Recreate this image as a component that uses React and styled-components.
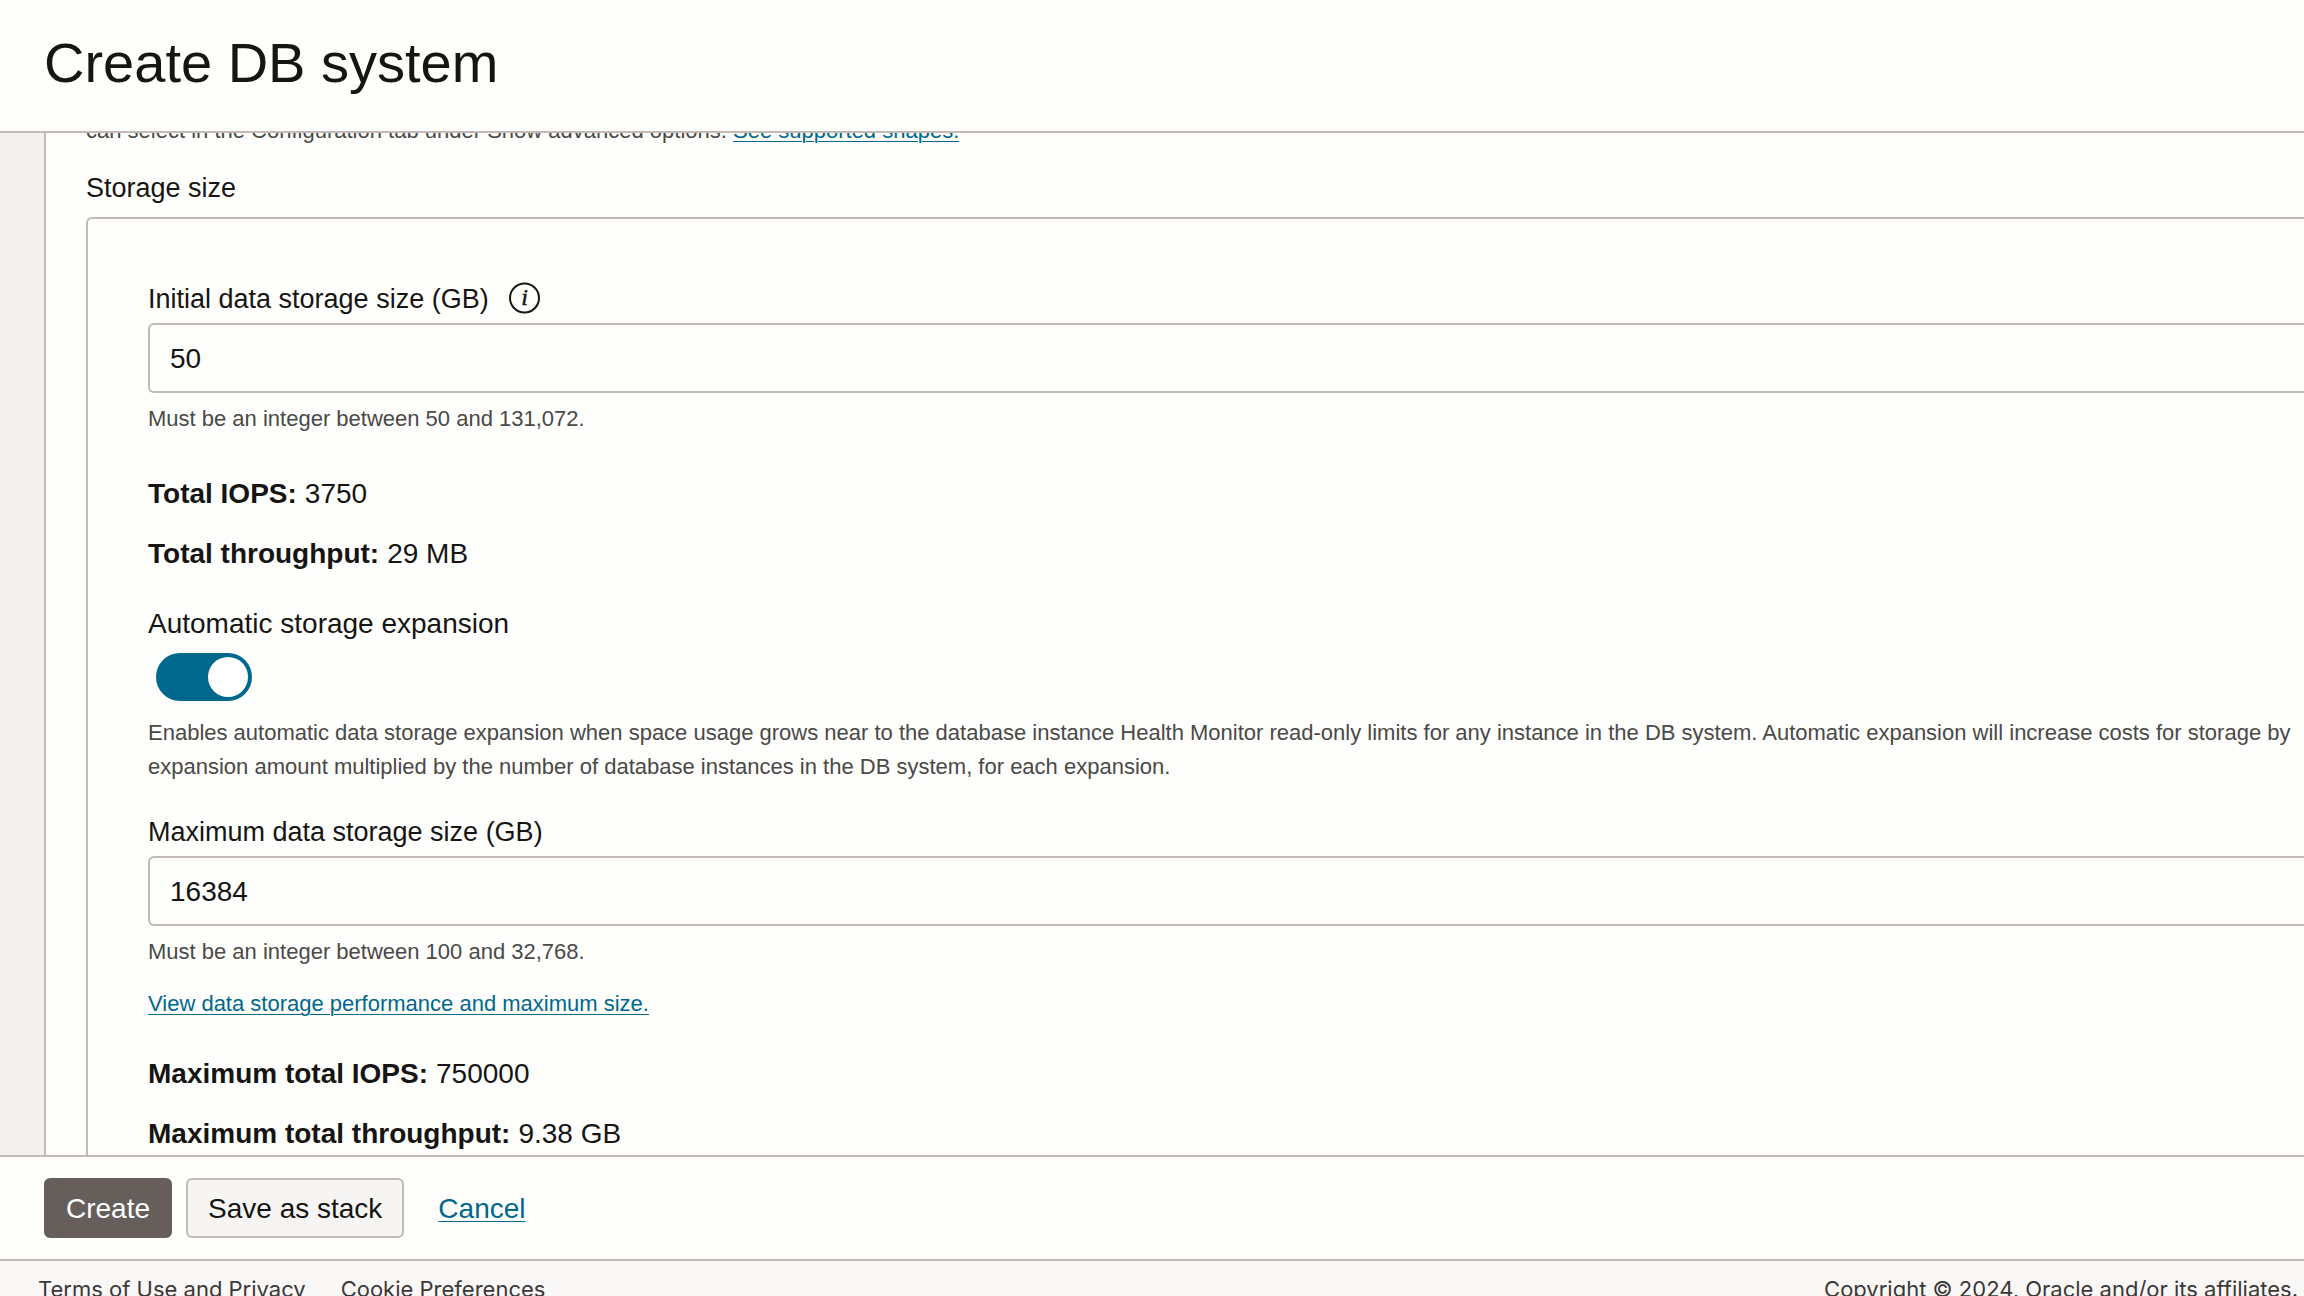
// Create DB system page
import React, { useState } from "react";
import styled, { createGlobalStyle } from "styled-components";

const GlobalStyle = createGlobalStyle`
  * {
    box-sizing: border-box;
  }
  body {
    margin: 0;
    background: #fefefc;
    color: #161513;
    font-family: 'Liberation Sans', Arial, sans-serif;
    font-size: 28px;
    line-height: 34px;
  }
`;

const Page = styled.div`
  display: flex;
  flex-direction: column;
  height: 100vh;
  overflow: hidden;
`;

// Header

const Header = styled.header`
  flex: none;
  padding: 31px 44px 36px;
  border-bottom: 2px solid #c1bab5;
`;

const Title = styled.h1`
  margin: 0;
  font-size: 56px;
  line-height: 64px;
  font-weight: 400;
`;

const Main = styled.main`
  flex: 1;
  min-height: 0;
  display: flex;
  padding-left: 44px;
  overflow: hidden;
  background: #f3f1f0;
`;

const Panel = styled.section`
  flex: 1;
  min-width: 0;
  display: flex;
  flex-direction: column;
  padding-left: 40px;
  border-left: 2px solid #c1bab5;
  background: #fefefc;
`;

const Hint = styled.p`
  margin: 0;
  color: #4a4947;
  font-size: 22px;
  white-space: nowrap;
`;

const ShapesHint = styled(Hint)`
  margin-top: -19px;
`;

const Link = styled.a`
  color: #00688c;
  text-decoration: underline;
  text-decoration-thickness: 1px;
  text-underline-offset: 3px;
`;

const SectionTitle = styled.h2`
  margin: 23px 0 12px;
  font-size: 27px;
  font-weight: 400;
`;

const StorageBox = styled.div`
  flex: 1;
  display: flex;
  flex-direction: column;
  padding: 63px 0 0 60px;
  border: 2px solid #c1bab5;
  border-right: 0;
  border-bottom: 0;
  border-top-left-radius: 6px;
`;

const Field = styled.div`
  display: flex;
  flex-direction: column;
  margin-bottom: 5px;
`;

const LabelRow = styled.div`
  display: flex;
  align-items: center;
  gap: 20px;
  height: 34px;
  margin-bottom: 7px;
`;

const Label = styled.label`
  font-size: 27px;
`;

const InfoButton = styled.button`
  display: flex;
  margin-bottom: 2px;
  padding: 0;
  border: 0;
  background: none;
  color: #161513;
`;

const Input = styled.input`
  width: 100%;
  height: 70px;
  margin-bottom: 9px;
  padding: 2px 20px 0;
  border: 2px solid #c1bab5;
  border-right: 0;
  border-radius: 6px 0 0 6px;
  background: #fefefc;
  color: #161513;
  font: inherit;
`;

// Totals

const Stats = styled.dl`
  display: flex;
  flex-direction: column;
  gap: 26px;
  margin: 36px 0;
`;

const Stat = styled.div`
  display: flex;
  gap: 8px;

  dt {
    font-weight: 700;
  }
  dd {
    margin: 0;
  }
`;

// Switch

const SwitchField = styled.div`
  display: flex;
  flex-direction: column;
  align-items: flex-start;
  gap: 12px;
  margin-bottom: 15px;
`;

const Switch = styled.input`
  appearance: none;
  display: flex;
  justify-content: ${({ checked }) => (checked ? "flex-end" : "flex-start")};
  width: 96px;
  height: 48px;
  margin: 0 0 0 8px;
  padding: 4px;
  border-radius: 24px;
  background: ${({ checked }) => (checked ? "#00688c" : "#8b8580")};

  &::before {
    content: "";
    width: 40px;
    height: 40px;
    border-radius: 50%;
    background: #fff;
  }
`;

const ExpansionHint = styled(Hint)`
  margin-bottom: 31px;
`;

const PerformanceHint = styled(Hint)`
  margin-top: 13px;
`;

// Action bar

const Actions = styled.div`
  flex: none;
  display: flex;
  align-items: center;
  gap: 14px;
  height: 104px;
  padding: 0 44px;
  border-top: 2px solid #c1bab5;
`;

const Button = styled.button`
  height: 60px;
  padding: 2px 20px 0;
  border: 2px solid ${({ $primary }) => ($primary ? "#665e5b" : "#c1bab5")};
  border-radius: 6px;
  background: ${({ $primary }) => ($primary ? "#665e5b" : "#f7f5f4")};
  color: ${({ $primary }) => ($primary ? "#fff" : "#161513")};
  font: inherit;
`;

const Cancel = styled(Link)`
  margin-left: 20px;
  padding-top: 2px;
`;

// Footer

const Footer = styled.footer`
  flex: none;
  display: flex;
  justify-content: space-between;
  height: 37px;
  padding: 12px 6px 0 38px;
  border-top: 2px solid #c1bab5;
  background: #faf8f7;
  color: #3a3836;
  font-family: Inter, 'Liberation Sans', sans-serif;
  font-size: 22px;
  line-height: 32px;
  white-space: nowrap;
`;

const FooterLinks = styled.nav`
  display: flex;
  gap: 35px;

  a {
    color: inherit;
    text-decoration: none;
  }
`;

const InfoIcon = () => (
  <svg width="32" height="32" viewBox="0 0 32 32" aria-hidden="true">
    <circle cx="15.5" cy="16" r="14.5" fill="none" stroke="currentColor" strokeWidth="2" />
    <text
      x="15.5"
      y="23"
      textAnchor="middle"
      fill="currentColor"
      stroke="currentColor"
      strokeWidth="0.5"
      fontFamily="'Liberation Serif', serif"
      fontSize="24"
      fontStyle="italic"
    >
      i
    </text>
  </svg>
);

const Totals = ({ items }) => (
  <Stats>
    {items.map(([name, value]) => (
      <Stat key={name}>
        <dt>{name}:</dt>
        <dd>{value}</dd>
      </Stat>
    ))}
  </Stats>
);

const StorageField = ({ id, label, info, hint, value, onChange }) => (
  <Field>
    <LabelRow>
      <Label htmlFor={id}>{label}</Label>
      {info && (
        <InfoButton type="button" aria-label="More information">
          <InfoIcon />
        </InfoButton>
      )}
    </LabelRow>
    <Input
      id={id}
      inputMode="numeric"
      value={value}
      aria-describedby={`${id}-hint`}
      onChange={(e) => onChange(e.target.value)}
    />
    <Hint id={`${id}-hint`}>{hint}</Hint>
  </Field>
);

const App = () => {
  const [initialSize, setInitialSize] = useState("50");
  const [maxSize, setMaxSize] = useState("16384");
  const [autoExpand, setAutoExpand] = useState(true);

  return (
    <Page>
      <GlobalStyle />
      <Header>
        <Title>Create DB system</Title>
      </Header>

      <Main>
        <Panel>
          <ShapesHint>
            can select in the Configuration tab under Show advanced options.{" "}
            <Link href="#shapes">See supported shapes.</Link>
          </ShapesHint>
          <SectionTitle>Storage size</SectionTitle>

          <StorageBox>
            <StorageField
              id="initial-size"
              label="Initial data storage size (GB)"
              info
              hint="Must be an integer between 50 and 131,072."
              value={initialSize}
              onChange={setInitialSize}
            />
            <Totals
              items={[
                ["Total IOPS", "3750"],
                ["Total throughput", "29 MB"],
              ]}
            />

            <SwitchField>
              <label htmlFor="auto-expand">Automatic storage expansion</label>
              <Switch
                id="auto-expand"
                type="checkbox"
                role="switch"
                checked={autoExpand}
                onChange={(e) => setAutoExpand(e.target.checked)}
              />
            </SwitchField>
            <ExpansionHint>
              Enables automatic data storage expansion when space usage grows near to the database
              instance Health Monitor read-only limits for any instance in the DB system. Automatic
              expansion will increase costs for storage by
              <br />
              expansion amount multiplied by the number of database instances in the DB system, for
              each expansion.
            </ExpansionHint>

            <StorageField
              id="max-size"
              label="Maximum data storage size (GB)"
              hint="Must be an integer between 100 and 32,768."
              value={maxSize}
              onChange={setMaxSize}
            />
            <PerformanceHint>
              <Link href="#performance">View data storage performance and maximum size.</Link>
            </PerformanceHint>
            <Totals
              items={[
                ["Maximum total IOPS", "750000"],
                ["Maximum total throughput", "9.38 GB"],
              ]}
            />
          </StorageBox>
        </Panel>
      </Main>

      <Actions>
        <Button type="button" $primary>
          Create
        </Button>
        <Button type="button">Save as stack</Button>
        <Cancel href="#cancel">Cancel</Cancel>
      </Actions>

      <Footer>
        <FooterLinks>
          <a href="#terms">Terms of Use and Privacy</a>
          <a href="#cookies">Cookie Preferences</a>
        </FooterLinks>
        <span>Copyright © 2024, Oracle and/or its affiliates.</span>
      </Footer>
    </Page>
  );
};

export default App;
